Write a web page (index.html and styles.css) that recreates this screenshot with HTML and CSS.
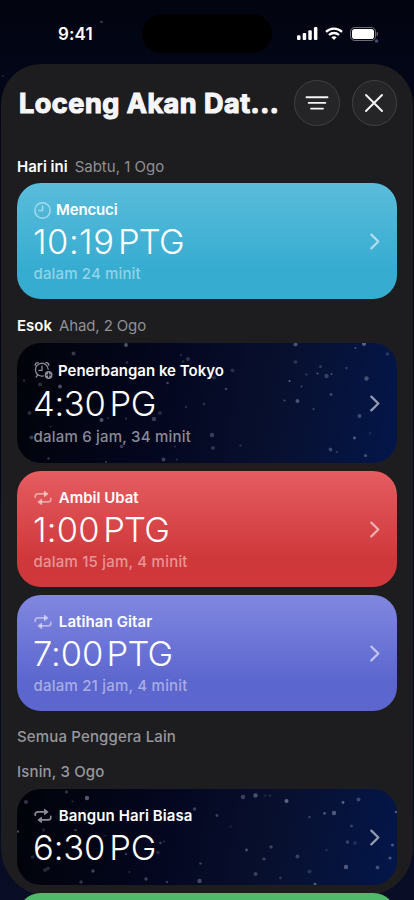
FILE: index.html
```
<!DOCTYPE html>
<html lang="ms">
<head>
<meta charset="utf-8">
<title>Loceng Akan Datang</title>
<link rel="stylesheet" href="styles.css">
</head>
<body>
<svg class="defs" width="0" height="0">
  <symbol id="chev" viewBox="0 0 10 17"><path d="M1.3 1.6 8.3 8.5 1.3 15.4" fill="none" stroke="currentColor" stroke-width="2.200" stroke-linecap="round" stroke-linejoin="round"/></symbol>
  <symbol id="repeat" viewBox="0 0 18 16">
    <g fill="none" stroke="currentColor" stroke-width="1.700" stroke-linecap="round"><path d="M1.2 7.2V6.4Q1.2 3.9 3.9 3.9H11"/><path d="M16.8 8.4V9.2Q16.8 11.9 14.1 11.9H7"/></g>
    <path d="M10.400 1.100V6.700L14.200 3.900ZM7.600 9.100V14.700L3.800 11.900Z" fill="currentColor" stroke="currentColor" stroke-width=".8" stroke-linejoin="round"/>
  </symbol>
</svg>
<div class="phone">
  <svg class="backdrop" viewBox="0 0 414 900"><g fill="#8b90b5"><circle cx="101.500" cy="22" r="1.300" opacity=".4"/><circle cx="376.500" cy="41" r="1.800" opacity=".5"/><circle cx="3" cy="76" r="1" opacity=".25"/></g></svg>
  <header class="status">
    <span class="clock">9:41</span>
    <div class="island"></div>
    <div class="indicators">
      <svg width="21" height="14" viewBox="0 0 21 14" fill="#fff"><rect x="0" y="8.300" width="3.500" height="4.700" rx="1.100"/><rect x="5.700" y="6" width="3.500" height="7" rx="1.100"/><rect x="11.300" y="3.200" width="3.500" height="9.800" rx="1.100"/><rect x="16.900" y="0" width="3.500" height="13" rx="1.100"/></svg>
      <svg width="18" height="14" viewBox="0 0 18 14"><g fill="none" stroke="#fff" stroke-width="2.300"><path d="M1 4.900Q4.300 1.700 9 1.700T17 4.900"/><path d="M4 8Q6.200 6 9 6T14 8"/></g><path d="M6.300 10.300Q9 8.200 11.700 10.300L9 13Z" fill="#fff"/></svg>
      <svg width="28" height="14" viewBox="0 0 28 14"><rect x=".5" y=".5" width="25" height="13" rx="4.200" fill="none" stroke="#fff" stroke-opacity=".42"/><rect x="2" y="2" width="22" height="10" rx="2.800" fill="#fff"/><path d="M26.700 4.700Q28 5.500 28 7T26.700 9.300Z" fill="#fff" opacity=".45"/></svg>
    </div>
  </header>
  <main class="sheet">
    <div class="titlebar">
      <h1>Loceng Akan Dat...</h1>
      <button class="round" aria-label="Tapis"><svg width="24" height="16" viewBox="0 0 24 16"><path d="M1.500 2.200H22.500M3.700 7.900H20.300M6 13.600H18" stroke="#f4f4f5" stroke-width="1.900" stroke-linecap="round"/></svg></button>
      <button class="round" aria-label="Tutup"><svg width="20" height="20" viewBox="0 0 20 20"><path d="M2 2 18 18M18 2 2 18" stroke="#f4f4f5" stroke-width="2" stroke-linecap="round"/></svg></button>
    </div>

    <h2 class="day today"><b>Hari ini</b><span>Sabtu, 1 Ogo</span></h2>
    <article class="card blue">
      <div class="info">
        <div class="label"><svg class="icon" width="17" height="17" viewBox="0 0 16 16" fill="none" stroke="currentColor" stroke-width="1.400" stroke-linecap="round"><circle cx="8" cy="8" r="7.200"/><path d="M8 3.500V8H4.600"/></svg><span class="name n-short">Mencuci</span></div>
        <div class="time"><span class="t-1019">10:19</span><span class="ptg">PTG</span></div>
        <div class="left">dalam 24 minit</div>
      </div>
      <svg class="chev"><use href="#chev"/></svg>
    </article>

    <h2 class="day tomorrow"><b>Esok</b><span class="tight">Ahad, 2 Ogo</span></h2>
    <article class="card night tall">
      <svg class="stars" viewBox="17 343 380 119"><g fill="#a5abc8">
        <circle cx="126" cy="344.500" r="1.900" opacity=".55"/><circle cx="73.500" cy="353" r="2" opacity=".38"/><circle cx="181" cy="354.500" r="1" opacity=".3"/><circle cx="188" cy="358.500" r="2" opacity=".3"/><circle cx="183" cy="361" r="1.500" opacity=".2"/><circle cx="127" cy="362" r="1.300" opacity=".3"/><circle cx="24" cy="380" r="1" opacity=".4"/><circle cx="40" cy="384" r="2" opacity=".3"/><circle cx="60" cy="386" r="2" opacity=".5"/><circle cx="167.500" cy="382.500" r="1.300" opacity=".45"/><circle cx="186" cy="406.500" r="1" opacity=".35"/><circle cx="204" cy="403.500" r="1.300" opacity=".3"/><circle cx="29.500" cy="412.500" r="2" opacity=".3"/><circle cx="101.500" cy="419.500" r="2" opacity=".55"/><circle cx="126" cy="418" r="1" opacity=".4"/><circle cx="108" cy="417.500" r="1" opacity=".3"/><circle cx="154" cy="418.500" r="2.300" opacity=".38"/><circle cx="160" cy="412.500" r="2" opacity=".25"/><circle cx="50.500" cy="426" r="1" opacity=".25"/><circle cx="31.500" cy="437" r="2" opacity=".4"/><circle cx="121.500" cy="446" r="1.800" opacity=".4"/><circle cx="48.500" cy="458" r="1.300" opacity=".35"/><circle cx="106" cy="461.500" r="1" opacity=".4"/><circle cx="163.500" cy="459" r="2" opacity=".4"/><circle cx="175" cy="446" r="1" opacity=".3"/><circle cx="177" cy="459" r="1" opacity=".3"/>
        <circle cx="295.500" cy="344" r="2" opacity=".5"/><circle cx="364" cy="343.500" r="2" opacity=".6"/><circle cx="355.500" cy="347.500" r="1" opacity=".5"/><circle cx="387.500" cy="353.500" r="1.800" opacity=".28"/><circle cx="295.500" cy="361.500" r="2" opacity=".25"/><circle cx="320.500" cy="366" r="1.500" opacity=".3"/><circle cx="346.500" cy="367.500" r="1.500" opacity=".25"/><circle cx="232.500" cy="370" r="2" opacity=".25"/><circle cx="306.500" cy="374" r="1.300" opacity=".25"/><circle cx="317.500" cy="373" r="1" opacity=".55"/><circle cx="331.500" cy="373.500" r="1" opacity=".5"/><circle cx="326.500" cy="375.500" r="2.200" opacity=".35"/><circle cx="366.500" cy="378" r="2.200" opacity=".48"/><circle cx="289.500" cy="380.500" r="1" opacity=".65"/><circle cx="214" cy="377" r="2" opacity=".25"/><circle cx="226" cy="388.500" r="1.300" opacity=".4"/><circle cx="301.500" cy="386" r="1" opacity=".45"/><circle cx="331" cy="394" r="1.500" opacity=".4"/><circle cx="284.500" cy="400" r="1.100" opacity=".45"/><circle cx="297.500" cy="400.500" r="2" opacity=".5"/><circle cx="313.500" cy="408.500" r="1" opacity=".45"/><circle cx="359.500" cy="415.500" r="2" opacity=".42"/><circle cx="212" cy="434.500" r="2.200" opacity=".38"/><circle cx="354.500" cy="437.500" r="1.400" opacity=".6"/><circle cx="370" cy="432.500" r="1.500" opacity=".15"/><circle cx="213" cy="447.500" r="2" opacity=".3"/><circle cx="240.500" cy="445" r="1.300" opacity=".22"/><circle cx="330.500" cy="449" r="1.900" opacity=".4"/><circle cx="337" cy="451.500" r="1.100" opacity=".35"/><circle cx="365.500" cy="455" r="1.600" opacity=".45"/>
      </g></svg>
      <div class="info">
        <div class="label"><svg class="icon" width="19" height="20" viewBox="0 0 19 20" fill="none" stroke="currentColor" stroke-width="1.300" stroke-linecap="round"><path d="M14.200 8.200A6.400 6.400 0 1 0 9.300 14.900M3.500 14.200 2.200 16M8 5V9.300H4.900M1.200 4.300Q1.300 1.600 4.300 1.700M11.800 1.700Q14.700 1.600 14.800 4.300"/><circle cx="14.600" cy="14" r="3.900" fill="currentColor" stroke="none"/><path d="M14.600 12V16M12.600 14H16.600" stroke="#04061a" stroke-width="1.200"/></svg><span class="name">Penerbangan ke Tokyo</span></div>
        <div class="time"><span>4:30</span><span class="pg">PG</span></div>
        <div class="left wide">dalam 6 jam, 34 minit</div>
      </div>
      <svg class="chev"><use href="#chev"/></svg>
    </article>

    <article class="card red">
      <div class="info">
        <div class="label rep"><svg class="icon" width="18" height="16"><use href="#repeat"/></svg><span class="name">Ambil Ubat</span></div>
        <div class="time"><span class="t-100">1:00</span><span class="ptg">PTG</span></div>
        <div class="left wide">dalam 15 jam, 4 minit</div>
      </div>
      <svg class="chev"><use href="#chev"/></svg>
    </article>

    <article class="card violet">
      <div class="info">
        <div class="label rep"><svg class="icon" width="18" height="16"><use href="#repeat"/></svg><span class="name n-loose">Latihan Gitar</span></div>
        <div class="time"><span class="t-700">7:00</span><span class="ptg">PTG</span></div>
        <div class="left wide">dalam 21 jam, 4 minit</div>
      </div>
      <svg class="chev"><use href="#chev"/></svg>
    </article>

    <h2 class="others">Semua Penggera Lain</h2>
    <h3 class="others date">Isnin, 3 Ogo</h3>
    <article class="card night low">
      <svg class="stars" viewBox="17 789 380 95"><g fill="#a5abc8">
        <circle cx="66.500" cy="791.500" r="1.800" opacity=".3"/><circle cx="87" cy="797.500" r="2.200" opacity=".6"/><circle cx="72.500" cy="801" r="1" opacity=".3"/><circle cx="26" cy="801.500" r="2" opacity=".35"/><circle cx="194.500" cy="808.500" r="1.700" opacity=".4"/><circle cx="18" cy="831" r="1.200" opacity=".5"/><circle cx="43.500" cy="829.500" r="1.800" opacity=".2"/><circle cx="75.500" cy="829.500" r="1.300" opacity=".35"/><circle cx="105" cy="835" r="1" opacity=".2"/><circle cx="160.500" cy="842.500" r="1.300" opacity=".4"/><circle cx="164" cy="841" r="1" opacity=".25"/><circle cx="126" cy="853.500" r="1.300" opacity=".35"/><circle cx="158" cy="852" r="1.800" opacity=".25"/><circle cx="32.500" cy="856.500" r="1.800" opacity=".25"/><circle cx="93" cy="870.500" r="1.700" opacity=".45"/><circle cx="48" cy="868" r="2" opacity=".25"/><circle cx="45" cy="869.500" r="2" opacity=".25"/><circle cx="81" cy="881.500" r="1.700" opacity=".35"/><circle cx="129.500" cy="871.500" r="1" opacity=".3"/><circle cx="146" cy="878.500" r="1.700" opacity=".42"/><circle cx="167" cy="881.500" r="1.300" opacity=".35"/><circle cx="200.500" cy="863" r="1.300" opacity=".4"/><circle cx="199.500" cy="880.500" r="2.200" opacity=".45"/>
        <circle cx="243" cy="796.500" r="2.200" opacity=".4"/><circle cx="255.500" cy="795" r="2.200" opacity=".5"/><circle cx="265" cy="795" r="1.500" opacity=".15"/><circle cx="270" cy="795" r="1.500" opacity=".15"/><circle cx="286.500" cy="800.500" r="2" opacity=".65"/><circle cx="343" cy="802" r="1.400" opacity=".6"/><circle cx="358.500" cy="799" r="2" opacity=".4"/><circle cx="217" cy="815" r="1.400" opacity=".4"/><circle cx="309.500" cy="816.500" r="1.200" opacity=".4"/><circle cx="324.500" cy="813" r="1.400" opacity=".5"/><circle cx="334" cy="812.500" r="2.200" opacity=".55"/><circle cx="396" cy="811.500" r="1.300" opacity=".55"/><circle cx="351.500" cy="825.500" r="1.600" opacity=".35"/><circle cx="230.500" cy="826" r="1.500" opacity=".12"/><circle cx="347.500" cy="841.500" r="1.700" opacity=".38"/><circle cx="355" cy="842.500" r="2" opacity=".2"/><circle cx="392.500" cy="844.500" r="1.600" opacity=".5"/><circle cx="246.500" cy="849.500" r="1.400" opacity=".5"/><circle cx="271" cy="846.500" r="1.700" opacity=".4"/><circle cx="326.500" cy="849.500" r="1.300" opacity=".2"/><circle cx="297.500" cy="856" r="2" opacity=".35"/><circle cx="264" cy="858.500" r="1.600" opacity=".4"/><circle cx="390" cy="857.500" r="1.600" opacity=".5"/><circle cx="346" cy="866.500" r="2.200" opacity=".55"/><circle cx="377.500" cy="867" r="1.900" opacity=".45"/><circle cx="309.500" cy="871" r="2" opacity=".25"/><circle cx="255.500" cy="873.500" r="2" opacity=".38"/><circle cx="280.500" cy="877.500" r="1.400" opacity=".3"/><circle cx="315" cy="883.500" r="1.500" opacity=".55"/>
      </g></svg>
      <div class="info">
        <div class="label rep"><svg class="icon" width="18" height="16"><use href="#repeat"/></svg><span class="name n-loose">Bangun Hari Biasa</span></div>
        <div class="time"><span class="t-630">6:30</span><span class="pg">PG</span></div>
      </div>
      <svg class="chev"><use href="#chev"/></svg>
    </article>
  </main>
  <div class="card green"></div>
</div>
</body>
</html>
```
FILE: styles.css
```
* { box-sizing: border-box; margin: 0; padding: 0; }
html, body { width: 414px; height: 900px; overflow: hidden; }
body { font-family: Inter, "Liberation Sans", sans-serif; color: #fff; background: #02040f; }
.defs { position: absolute; }
svg { display: block; }

.phone {
  position: relative;
  width: 414px;
  height: 900px;
  overflow: hidden;
  background: linear-gradient(180deg, #02040f 0, #030617 70px, #060a20 800px, #090d26 900px);
}
.backdrop { position: absolute; inset: 0; width: 414px; height: 900px; }

.status { position: relative; height: 64px; display: grid; grid-template-columns: 142px 130px 142px; padding-top: 14px; align-items: start; }
.clock { padding-left: 58px; font-size: 17px; line-height: 40px; font-weight: 600; letter-spacing: .1px; }
.island { height: 39px; border-radius: 20px; background: #000; }
.indicators { display: flex; gap: 7px; align-items: center; padding: 13px 0 0 24.500px; }

.sheet {
  position: relative;
  width: 412px;
  height: 832px;
  margin-left: 1px;
  padding: 0 16px;
  background: #1d1d1f;
  border-radius: 40px 40px 48px 48px;
}

.titlebar { display: flex; align-items: center; gap: 12px; height: 78px; }
h1 {
  flex: 1;
  min-width: 0;
  padding: 1px 0 0 2px;
  font-size: 27px;
  font-weight: 700;
  line-height: 34px;
  letter-spacing: .52px;
  white-space: nowrap;
  color: #f6f6f8;
  -webkit-text-stroke: 1.200px #f6f6f8;
  stroke-linejoin: round;
}
.round {
  flex: none;
  width: 45.500px;
  height: 45.500px;
  border: 1px solid #414144;
  border-radius: 50%;
  background: #252528;
  display: flex;
  align-items: center;
  justify-content: center;
}

.day { height: 44px; padding-top: 17px; display: flex; gap: 7px; font-size: 15px; line-height: 20px; font-weight: 400; }
.day b { font-weight: 600; }
.day span { color: #909096; }
.day.today { height: 41px; padding-top: 15px; }
.tight { letter-spacing: -.12px; }
.others { height: 43px; padding-top: 16px; font-size: 15px; line-height: 20px; font-weight: 500; letter-spacing: .15px; color: #97979d; }
.others.date { height: 35px; padding-top: 8px; }

.card {
  position: relative;
  display: flex;
  justify-content: space-between;
  align-items: center;
  height: 116px;
  padding: 0 17px 0 16.500px;
  border-radius: 24px;
  overflow: hidden;
}
.card + .card { margin-top: 8px; }
.blue { background: linear-gradient(180deg, #5bbcdb 0%, #36acd1 75%, #37acd1 100%); }
.red { background: linear-gradient(180deg, #e55d61 0%, #cf383b 75%, #d0383b 100%); }
.violet { background: linear-gradient(180deg, #8187e0 0%, #5b66ce 75%, #5c66ce 100%); }
.night { background: linear-gradient(100deg, #010309 0%, #040720 40%, #08102f 68%, #03164a 100%); }
.tall { height: 120px; }
.low { height: 96px; }
.stars { position: absolute; inset: 0; width: 100%; height: 100%; filter: blur(.6px); opacity: .85; }
.info { position: relative; padding-top: 2px; }
.label { display: flex; align-items: center; gap: 5.500px; height: 20px; }
.label.rep { gap: 6.500px; padding-left: .8px; }
.tall .info { padding-top: 1px; }
.tall .label { height: 22px; gap: 5.500px; }
.name { font-size: 15px; line-height: 20px; font-weight: 600; white-space: nowrap; }
.n-short { letter-spacing: -.15px; }
.n-loose { letter-spacing: .1px; }
.icon, .left, .chev { color: rgba(255, 255, 255, .48); }
.chev { color: rgba(255, 255, 255, .58); }
.night .icon, .night .left { color: #898b97; }
.time { display: flex; height: 44px; font-size: 34.500px; line-height: 44px; font-weight: 350; white-space: nowrap; }
.time span:first-child { margin-left: -.5px; letter-spacing: -.3px; }
.time .t-1019:first-child { letter-spacing: .5px; }
.time .t-100:first-child { letter-spacing: .2px; }
.time .t-700:first-child { letter-spacing: -.1px; }
.time .t-630:first-child { letter-spacing: -.1px; }
.ptg { margin-left: 3.500px; letter-spacing: -.8px; }
.pg { margin-left: 4px; letter-spacing: -.3px; }
.left { font-size: 15px; line-height: 20px; font-weight: 500; letter-spacing: .14px; white-space: nowrap; }
.wide { letter-spacing: .21px; }
.tall .left { padding-top: 1px; }
.chev { position: relative; flex: none; width: 10px; height: 17px; }

.green { position: absolute; left: 17px; top: 893px; width: 380px; background: linear-gradient(180deg, #51bb6b, #35a853); }
```
